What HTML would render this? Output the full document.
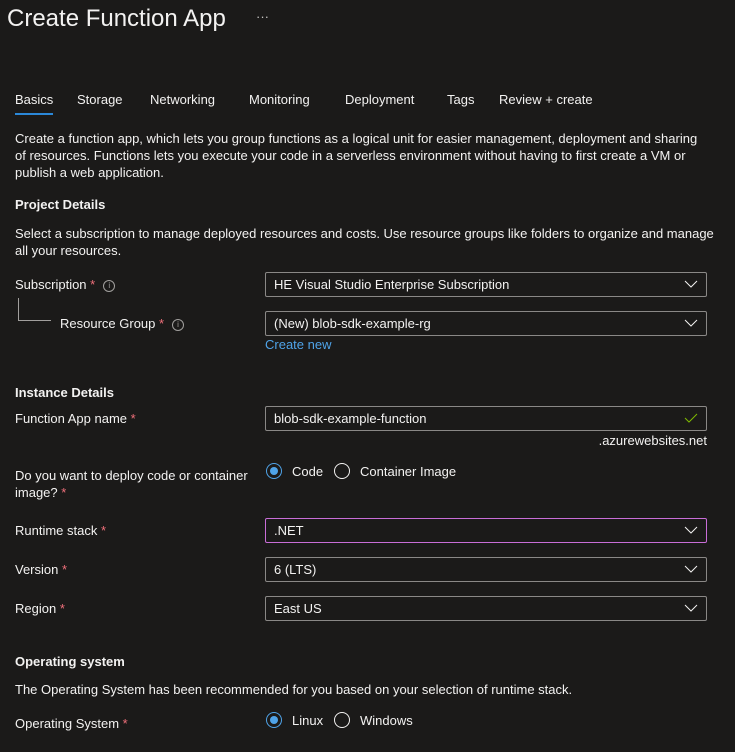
<!DOCTYPE html>
<html><head><meta charset="utf-8"><style>
body{margin:0;width:735px;height:752px;background:#1b1a19;color:#f3f2f1;font-family:"Liberation Sans",sans-serif;font-size:13px;position:relative;overflow:hidden}
.a{position:absolute;white-space:nowrap}
.h{font-weight:bold}
.r{color:#f1707b}
.box{position:absolute;left:265px;width:440px;height:23px;border:1px solid #8a8886;border-radius:2px}
.box span{position:absolute;left:8px;top:4px}
.box svg{position:absolute;right:8px;top:6px}
.rad{position:absolute;width:16px;height:16px;border:1px solid #f3f2f1;border-radius:50%;box-sizing:border-box}
.rad.on{border-color:#4fa3e8}
.rad.on:after{content:"";position:absolute;left:3px;top:3px;width:8px;height:8px;border-radius:50%;background:#4fa3e8}
.i{display:inline-block;width:10px;height:10px;border:1px solid #a19f9d;border-radius:50%;font-size:8px;line-height:10px;text-align:center;color:#a19f9d;margin-left:8px;vertical-align:1px}
</style></head><body>
<div class="a" style="left:7px;top:5px;font-size:24px">Create Function App</div>
<div class="a" style="left:256px;top:9px;color:#c8c6c4">···</div>
<div class="a" style="left:15px;top:92px">Basics</div>
<div class="a" style="left:15px;top:113px;width:38px;height:2px;background:#2b88d8"></div>
<div class="a" style="left:77px;top:92px">Storage</div>
<div class="a" style="left:150px;top:92px">Networking</div>
<div class="a" style="left:249px;top:92px">Monitoring</div>
<div class="a" style="left:345px;top:92px">Deployment</div>
<div class="a" style="left:447px;top:92px">Tags</div>
<div class="a" style="left:499px;top:92px">Review + create</div>
<div class="a" style="left:15px;top:130px;line-height:17px">Create a function app, which lets you group functions as a logical unit for easier management, deployment and sharing<br>of resources. Functions lets you execute your code in a serverless environment without having to first create a VM or<br>publish a web application.</div>
<div class="a h" style="left:15px;top:197px">Project Details</div>
<div class="a" style="left:15px;top:225px;line-height:17px;white-space:normal;width:705px">Select a subscription to manage deployed resources and costs. Use resource groups like folders to organize and manage all your resources.</div>
<div class="a" style="left:15px;top:277px">Subscription <span class="r">*</span><span class="i">i</span></div>
<div class="a" style="left:18px;top:298px;width:32px;height:22px;border-left:1px solid #a19f9d;border-bottom:1px solid #a19f9d"></div>
<div class="a" style="left:60px;top:316px">Resource Group <span class="r">*</span><span class="i">i</span></div>
<div class="box" style="top:272px"><span>HE Visual Studio Enterprise Subscription</span><svg width="14" height="10"><path d="M1 2l6 6 6-6" stroke="#f3f2f1" fill="none"/></svg></div>
<div class="box" style="top:311px"><span>(New) blob-sdk-example-rg</span><svg width="14" height="10"><path d="M1 2l6 6 6-6" stroke="#f3f2f1" fill="none"/></svg></div>
<div class="a" style="left:265px;top:337px;color:#4fa3e8">Create new</div>
<div class="a h" style="left:15px;top:385px">Instance Details</div>
<div class="a" style="left:15px;top:411px">Function App name <span class="r">*</span></div>
<div class="box" style="top:406px"><span>blob-sdk-example-function</span><svg width="14" height="10"><path d="M1 5l4 4 8-8" stroke="#7fba00" fill="none"/></svg></div>
<div class="a" style="right:28px;top:433px">.azurewebsites.net</div>
<div class="a" style="left:15px;top:467px;line-height:17px">Do you want to deploy code or container<br>image? <span class="r">*</span></div>
<div class="rad on" style="left:266px;top:463px"></div>
<div class="a" style="left:292px;top:464px">Code</div>
<div class="rad" style="left:334px;top:463px"></div>
<div class="a" style="left:360px;top:464px">Container Image</div>
<div class="a" style="left:15px;top:523px">Runtime stack <span class="r">*</span></div>
<div class="box" style="top:518px;border-color:#c86dd7"><span>.NET</span><svg width="14" height="10"><path d="M1 2l6 6 6-6" stroke="#f3f2f1" fill="none"/></svg></div>
<div class="a" style="left:15px;top:562px">Version <span class="r">*</span></div>
<div class="box" style="top:557px"><span>6 (LTS)</span><svg width="14" height="10"><path d="M1 2l6 6 6-6" stroke="#f3f2f1" fill="none"/></svg></div>
<div class="a" style="left:15px;top:601px">Region <span class="r">*</span></div>
<div class="box" style="top:596px"><span>East US</span><svg width="14" height="10"><path d="M1 2l6 6 6-6" stroke="#f3f2f1" fill="none"/></svg></div>
<div class="a h" style="left:15px;top:654px">Operating system</div>
<div class="a" style="left:15px;top:682px">The Operating System has been recommended for you based on your selection of runtime stack.</div>
<div class="a" style="left:15px;top:716px">Operating System <span class="r">*</span></div>
<div class="rad on" style="left:266px;top:712px"></div>
<div class="a" style="left:292px;top:713px">Linux</div>
<div class="rad" style="left:334px;top:712px"></div>
<div class="a" style="left:360px;top:713px">Windows</div>
</body></html>
